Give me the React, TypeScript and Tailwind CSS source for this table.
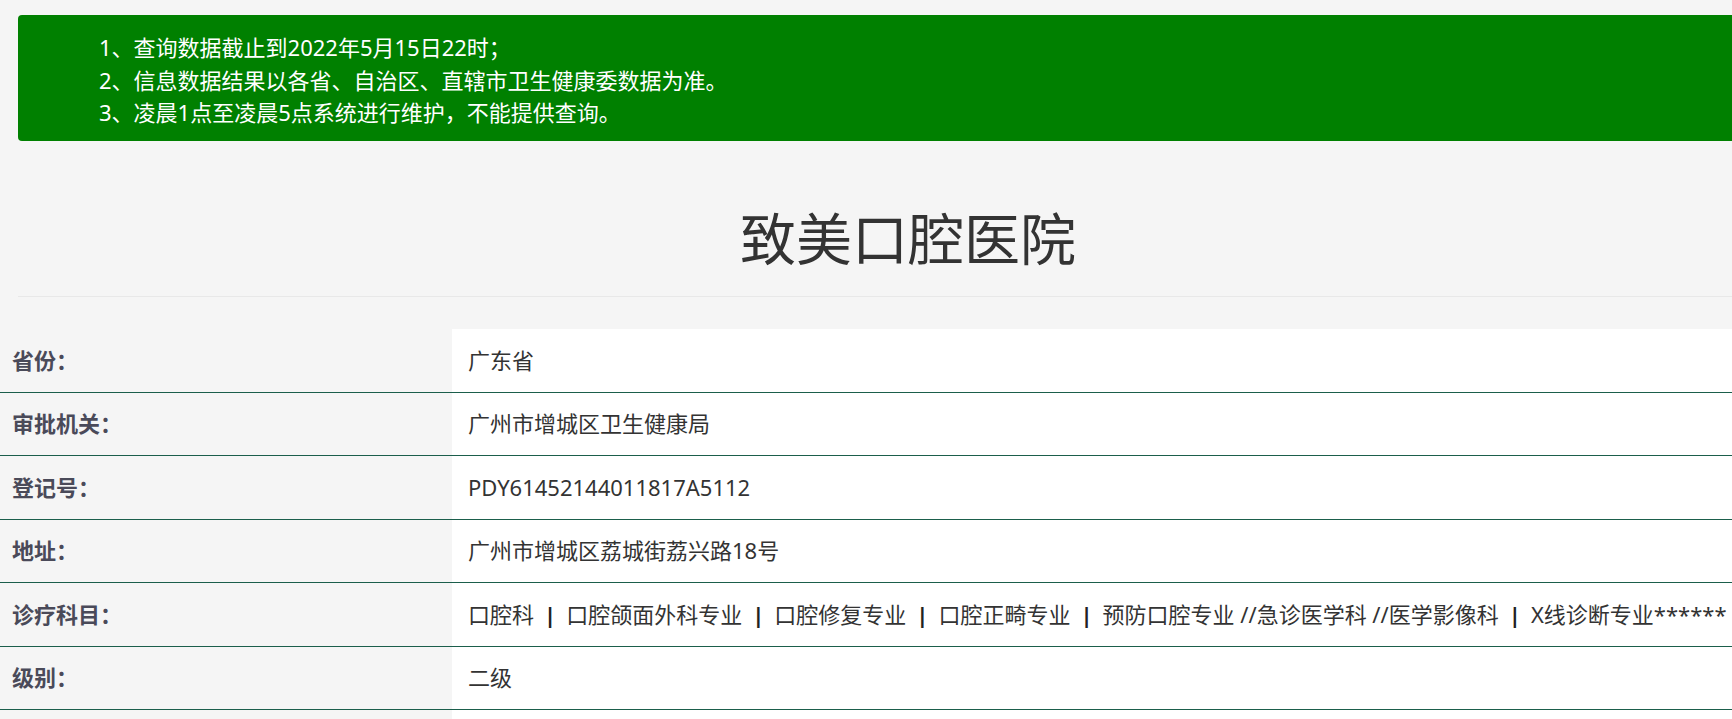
import React from "react";

const font = { fontFamily: '"Noto Sans", "Noto Sans CJK SC", sans-serif' };

function Bar() {
  return <span className="inline-block px-[10px] font-bold text-[#222]">|</span>;
}

const rows: { label: string; value: React.ReactNode }[] = [
  { label: "省份：", value: "广东省" },
  { label: "审批机关：", value: "广州市增城区卫生健康局" },
  { label: "登记号：", value: "PDY61452144011817A5112" },
  { label: "地址：", value: "广州市增城区荔城街荔兴路18号" },
  {
    label: "诊疗科目：",
    value: (
      <>
        口腔科<Bar />口腔颌面外科专业<Bar />口腔修复专业<Bar />口腔正畸专业<Bar />预防口腔专业 //急诊医学科 //医学影像科<Bar />X线诊断专业******
      </>
    ),
  },
  { label: "级别：", value: "二级" },
  { label: "", value: "" },
];

export default function App() {
  return (
    <div className="w-full h-screen overflow-hidden bg-[#f5f5f5]" style={font}>
      <div className="w-[1798px]">
        <div className="pl-[18px] pt-[15px]">
          <div className="bg-[#008000] rounded-[4px] h-[126px] pl-[81px] pt-[16px] text-white text-[22px] leading-[32.5px]">
            <p>1、查询数据截止到2022年5月15日22时；</p>
            <p>2、信息数据结果以各省、自治区、直辖市卫生健康委数据为准。</p>
            <p>3、凌晨1点至凌晨5点系统进行维护，不能提供查询。</p>
          </div>
          <div className="pt-[65px] pb-[26px] border-b border-[#e8e8e8]">
            <h1 className="text-center text-[56px] leading-[64px] text-[#333]">致美口腔医院</h1>
          </div>
        </div>
        <div className="mt-[32px]">
          {rows.map((r, i) => (
            <div key={i} className="flex h-[63.5px] border-b border-[#1b5e4b]">
              <div className="w-[452px] shrink-0 bg-[#f5f5f5] pl-[12px] flex items-center text-[22px] font-bold text-[#4a4a59]">
                {r.label}
              </div>
              <div className="flex-1 bg-white pl-[16px] flex items-center text-[22px] text-[#333] whitespace-nowrap">
                {r.value}
              </div>
            </div>
          ))}
        </div>
      </div>
    </div>
  );
}
